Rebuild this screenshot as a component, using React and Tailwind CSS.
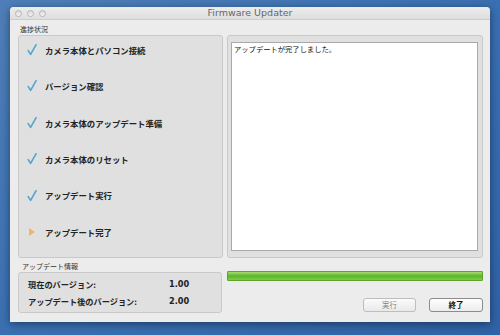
import React from 'react';

const JP = { fontFamily: '"Noto Sans CJK JP", "Noto Sans", sans-serif' };

const steps = [
  { label: 'カメラ本体とパソコン接続', done: true },
  { label: 'バージョン確認', done: true },
  { label: 'カメラ本体のアップデート準備', done: true },
  { label: 'カメラ本体のリセット', done: true },
  { label: 'アップデート実行', done: true },
  { label: 'アップデート完了', done: false },
];

function Check() {
  return (
    <svg width="10" height="12" viewBox="0 0 10 12" className="shrink-0">
      <path d="M1.2 6.6 L3.6 10.4 L9 0.8" fill="none" stroke="#58a6cf" strokeWidth="1.7" strokeLinecap="round" strokeLinejoin="round" />
    </svg>
  );
}

function Arrow() {
  return (
    <svg width="10" height="12" viewBox="0 0 10 12" className="shrink-0">
      <path d="M2 2 L8 6 L2 10 Z" fill="#f2b466" />
    </svg>
  );
}

function Light() {
  return <span className="block h-[7px] w-[7px] rounded-full border border-[#b5b5b5] bg-gradient-to-b from-[#d8d8d8] to-[#f6f6f6]" />;
}

export default function App() {
  return (
    <div className="h-[335px] w-[500px] overflow-hidden bg-gradient-to-br from-[#4f7fb8] via-[#3a70b2] to-[#2f62a6] pl-[10px] pt-[7px]" style={JP}>
      <div className="flex h-[315px] w-[480px] flex-col overflow-hidden rounded-t-[4px] bg-[#ececec] shadow-[0_2px_8px_rgba(0,0,0,0.45)]">
        {/* title bar */}
        <div className="relative flex h-[13px] items-center border-b border-[#cdcdcd] bg-gradient-to-b from-[#ededed] to-[#dedede] pl-[5px]">
          <div className="flex gap-[5px]">
            <Light />
            <Light />
            <Light />
          </div>
          <div className="absolute inset-0 flex items-center justify-center text-[9.5px] leading-none text-[#666]" style={{ fontFamily: '"DejaVu Sans", "Liberation Sans", sans-serif' }}>
            Firmware Updater
          </div>
        </div>

        <div className="pl-[10px] pt-[5px] text-[7px] leading-[9px] text-[#333]">進捗状況</div>

        <div className="mt-[1px] flex gap-[4px] pl-[8px] pr-[7px]">
          <div className="flex h-[223px] w-[205px] flex-col gap-[22.4px] rounded-[3px] border border-[#c9c9c9] bg-[#e0e0e0] pl-[8px] pt-[7px]">
            {steps.map((s) => (
              <div key={s.label} className="flex h-[14px] items-center gap-[8px]">
                {s.done ? <Check /> : <Arrow />}
                <span className="text-[8.4px] font-bold leading-none text-[#222]">{s.label}</span>
              </div>
            ))}
          </div>
          <div className="h-[223px] flex-1 rounded-[3px] border border-[#c9c9c9] bg-[#e0e0e0] pb-[6px] pl-[3px] pr-[4px] pt-[6px]">
            <div className="h-full border border-[#a9a9a9] bg-white px-[2px] pt-[1px] text-[7.3px] leading-[10px] text-[#111]">
              アップデートが完了しました。
            </div>
          </div>
        </div>

        <div className="flex gap-[5px] pl-[8px] pr-[7px]">
          <div className="w-[204px]">
            <div className="pl-[4px] pt-[4px] text-[7px] leading-[9px] text-[#333]">アップデート情報</div>
            <div className="mt-[1px] flex h-[41px] flex-col justify-center gap-[8px] rounded-[3px] border border-[#c9c9c9] bg-[#e0e0e0] pl-[9px]">
              <div className="flex items-center text-[8.2px] font-bold leading-none text-[#222]">
                <span className="w-[141px]">現在のバージョン:</span>
                <span style={{ fontFamily: '"DejaVu Sans", sans-serif' }}>1.00</span>
              </div>
              <div className="flex items-center text-[8.2px] font-bold leading-none text-[#222]">
                <span className="w-[141px]">アップデート後のバージョン:</span>
                <span style={{ fontFamily: '"DejaVu Sans", sans-serif' }}>2.00</span>
              </div>
            </div>
          </div>
          <div className="flex flex-1 flex-col pt-[13px]">
            <div className="h-[10px] rounded-[1px] border border-[#5da52a] bg-gradient-to-b from-[#a6dc6c] via-[#5ab52a] to-[#7fcb47]" />
            <div className="mt-[17px] flex justify-end gap-[13px]">
              <div className="flex h-[14px] w-[53px] items-center justify-center rounded-[3px] border border-[#bdbdbd] bg-gradient-to-b from-[#fbfbfb] to-[#e9e9e9] text-[7.5px] leading-none text-[#8a8a8a]">
                実行
              </div>
              <div className="flex h-[14px] w-[54px] items-center justify-center rounded-[3px] border border-[#8c8c8c] bg-gradient-to-b from-[#ffffff] to-[#ececec] text-[7.5px] font-bold leading-none text-[#111]">
                終了
              </div>
            </div>
          </div>
        </div>
      </div>
    </div>
  );
}
